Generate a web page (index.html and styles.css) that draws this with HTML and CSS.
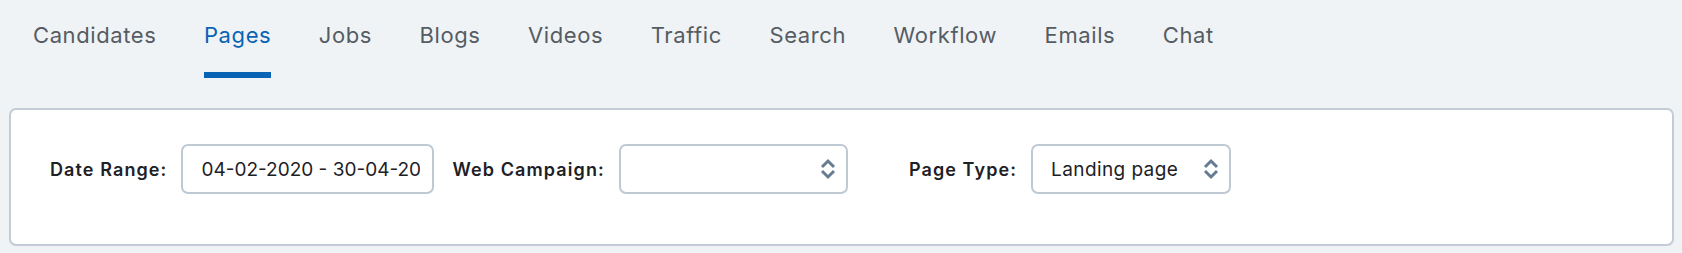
FILE: index.html
```html
<!DOCTYPE html>
<html lang="en">
<head>
    <meta charset="UTF-8">
    <meta name="viewport" content="width=device-width, initial-scale=1.0">
    <title>Analytics - Pages</title>
    <link rel="stylesheet" href="styles.css">
</head>
<body>
    <nav class="tabs">
        <a class="tab" href="#">Candidates</a>
        <a class="tab tab-active" href="#">Pages</a>
        <a class="tab" href="#">Jobs</a>
        <a class="tab" href="#">Blogs</a>
        <a class="tab" href="#">Videos</a>
        <a class="tab" href="#">Traffic</a>
        <a class="tab" href="#">Search</a>
        <a class="tab" href="#">Workflow</a>
        <a class="tab" href="#">Emails</a>
        <a class="tab" href="#">Chat</a>
    </nav>

    <div class="filters">
        <div class="field field-date">
            <label class="field-label" for="date-range">Date Range:</label>
            <input class="date-input" id="date-range" type="text" value="04-02-2020 - 30-04-2020">
        </div>

        <div class="field field-campaign">
            <label class="field-label">Web Campaign:</label>
            <div class="select select-campaign">
                <span class="select-value"></span>
                <svg class="select-arrows" width="16" height="22" viewBox="0 0 16 22">
                    <polyline points="2,9 8,3 14,9" />
                    <polyline points="2,13 8,19 14,13" />
                </svg>
            </div>
        </div>

        <div class="field">
            <label class="field-label">Page Type:</label>
            <div class="select select-type">
                <span class="select-value">Landing page</span>
                <svg class="select-arrows" width="16" height="22" viewBox="0 0 16 22">
                    <polyline points="2,9 8,3 14,9" />
                    <polyline points="2,13 8,19 14,13" />
                </svg>
            </div>
        </div>
    </div>
</body>
</html>
```

FILE: styles.css
```css
body {
    margin: 0;
    font-family: Inter, "Open Sans", Arial, sans-serif;
    background-color: #eff3f6;
    color: #1d2126;
}
.tabs {
    display: flex;
    padding-left: 33px;
    gap: 47.5px;
}
.tab {
    display: block;
    padding-top: 22px;
    padding-bottom: 24px;
    border-bottom: 6px solid transparent;
    font-size: 22px;
    line-height: 26px;
    letter-spacing: 0.6px;
    color: #565c63;
    text-decoration: none;
}
.tab-active {
    color: #0863b5;
    border-bottom-color: #0863b5;
}
.filters {
    display: flex;
    align-items: center;
    margin: 30px 8px 0 9px;
    padding: 34px 38px 50px 39px;
    background-color: #fff;
    border: 2px solid #c2cbd6;
    border-radius: 7px;
}
.field {
    display: flex;
    align-items: center;
}
.field-date {
    margin-right: 18px;
}
.field-campaign {
    margin-right: 61px;
}
.field-label {
    margin-right: 14px;
    font-size: 18px;
    font-weight: 600;
    letter-spacing: 1.1px;
    color: #1d2126;
}
.date-input {
    box-sizing: border-box;
    width: 253px;
    height: 50px;
    padding: 0 12px 0 18px;
    border: 2px solid #bfc9d4;
    border-radius: 7px;
    font-family: inherit;
    font-size: 19px;
    color: #1d2126;
    outline: none;
}
.select {
    box-sizing: border-box;
    display: flex;
    align-items: center;
    justify-content: space-between;
    height: 50px;
    padding: 0 10px 0 18px;
    border: 2px solid #bfc9d4;
    border-radius: 7px;
    font-size: 19px;
    letter-spacing: 0.4px;
}
.select-campaign {
    width: 229px;
}
.select-type {
    width: 200px;
}
.select-arrows {
    fill: none;
    stroke: #687b94;
    stroke-width: 3;
}
```
